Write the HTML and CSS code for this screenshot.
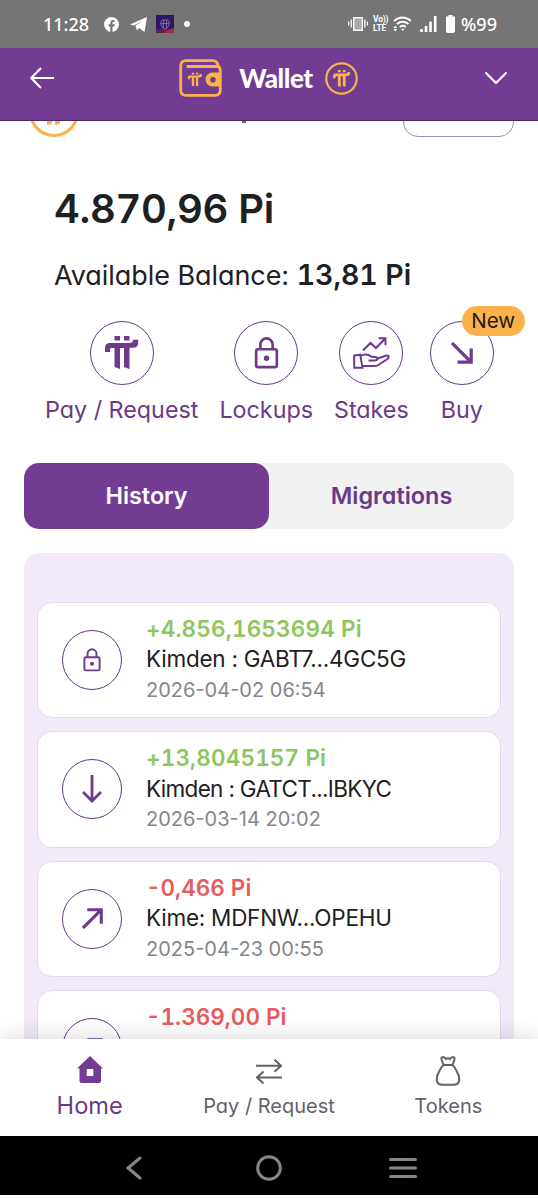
FILE: index.html
```html
<!DOCTYPE html>
<html lang="en">
<head>
  <meta charset="UTF-8">
  <title>Wallet</title>
  <link rel="stylesheet" href="styles.css">
</head>
<body>

<svg class="sprite">
  <symbol id="pi" viewBox="0 0 34 34">
    <path d="M9.500 0h5.500v4.500h-5.500zM19 0h5.500v4.500h-5.500zM0 16v-4c0-3.500 2-5 5-5h19c3 0 4-1 4-3.200h5.200v2.700c0 3.500-1.800 5.300-5 5.300h-3.700V33l-5.500-2V12h-4v21l-5.500-2V12H7c-1.500 0-2 .5-2 2v2z"/>
  </symbol>
  <symbol id="lock" viewBox="0 0 26 34">
    <path d="M6.500 13V8a6.500 6.500 0 0 1 13 0v5M4 13h18a2 2 0 0 1 2 2v15a2 2 0 0 1-2 2H4a2 2 0 0 1-2-2V15a2 2 0 0 1 2-2z"/>
    <circle cx="13" cy="22.500" r="1.500"/>
  </symbol>
  <symbol id="upright" viewBox="0 0 22 22"><path d="M1 21L20 2M5.500 1.800H20.200V16.500"/></symbol>
</svg>

<div class="statusbar">
  <span class="clock">11:28</span>
  <svg class="fb" width="15" height="15" viewBox="0 0 15 15"><circle cx="7.500" cy="7.500" r="7.500" fill="#fff"/><path d="M6.300 15V9.500H4.500V7.200h1.800V5.900c0-2 1-3 2.800-3h1.500v2.100H9.500c-.7 0-1 .3-1 1v1.200h2.200l-.3 2.300H8.500V15z" fill="#757575"/></svg>
  <svg class="tg" width="17" height="15" viewBox="0 0 17 15"><path d="M0 7.500L17 0l-2.500 15-5.500-4-2 2.500-1.500-4.700L13 3.500 4 8.500z" fill="#fff"/></svg>
  <svg class="app" width="18" height="18" viewBox="0 0 18 18"><rect width="18" height="18" fill="#2b1763"/><path d="M0 14l18-1v5H0z" fill="#61204f"/><path d="M10 16l8-3v5H9z" fill="#a02a55"/><path d="M6 5h6l1.500 3-1.500 4-3 2-3-2-1.500-4zM7.500 5v8M10.500 5v8M5 8.500h8" fill="none" stroke="#8b78bd" stroke-width=".8"/></svg>
  <span class="more"></span>
  <svg class="vibrate" width="20" height="14" viewBox="0 0 20 14"><path d="M.6 4.500v4M3.200 2.500v8M16.800 2.500v8M19.400 4.500v4" stroke="#fff" stroke-width="1.300"/><rect x="5.700" y=".7" width="8.600" height="12.600" fill="#a9a9a9" stroke="#fff" stroke-width="1.300"/></svg>
  <span class="volte"><b>Vo))</b><b>LTE</b></span>
  <svg class="wifi" width="19" height="16" viewBox="0 0 19 16"><path d="M1 5Q9.500-2 18 5M4 8q5.500-4.500 11.500 0M6.800 11q3-2.400 6 0" fill="none" stroke="#fff" stroke-width="1.800"/><path d="M8.200 12.800h3.300L9.800 15zM.5 12l1.800-2.500L4 12zM.5 13h3.500l-1.700 2.500z" fill="#fff"/></svg>
  <svg class="signal" width="17" height="16" viewBox="0 0 17 16"><path d="M1.500 13v3M6 10v6M10.500 5.500V16M15.200 0v16" stroke="#fff" stroke-width="2.600"/></svg>
  <svg class="battery" width="9" height="18" viewBox="0 0 9 18"><path d="M2.500 0h4v1.500H9V16a2 2 0 0 1-2 2H2a2 2 0 0 1-2-2V1.500h2.500z" fill="#fff"/></svg>
  <span class="percent">%99</span>
</div>

<div class="header">
  <svg class="back" width="24" height="22" viewBox="0 0 24 22"><path d="M24 11H1.500M11 1L1.200 11 11 21"/></svg>
  <div class="brand">
    <svg class="wallet" width="43" height="38" viewBox="0 0 43 38">
      <path d="M7 1.700h27q4.500 0 5 5.300 2.300 1.500 2.300 5v19q0 5.300-5.300 5.300H7q-5.300 0-5.300-5.300V7q0-5.300 5.300-5.300zM7.500 7.500h31" fill="none" stroke="#fbb24b" stroke-width="2.800"/>
      <path d="M42 13.500h-8.500a7 7 0 0 0 0 14H42zM34 18a2.800 2.800 0 1 1 0 5.600 2.800 2.800 0 0 1 0-5.600z" fill="#fbb24b" fill-rule="evenodd"/>
      <use href="#pi" x="8.500" y="13.500" width="15" height="14.500" fill="#fbb24b"/>
    </svg>
    <span class="title">Wallet</span>
    <svg class="coin" width="33" height="33" viewBox="0 0 33 33"><circle cx="16.500" cy="16.500" r="15.200" fill="none" stroke="#fbb24b" stroke-width="2.200"/><use href="#pi" x="8" y="8" width="17.500" height="17.500" fill="#fbb24b"/></svg>
  </div>
  <svg class="chevron" width="24" height="14" viewBox="0 0 24 14"><path d="M1.500 1.500L12 12 22.500 1.500"/></svg>
</div>

<div class="content">
  <div class="account">
    <div class="avatar"><svg width="20" height="34" viewBox="0 0 20 34"><path d="M3 0h5v33l-5 1zM11 0h5v33l-5 1z" fill="#fbb24b"/></svg></div>
    <div class="caret"></div>
    <div class="outline"></div>
  </div>

  <div class="total"><span>4.870,96 Pi</span></div>
  <div class="available"><span>Available Balance:</span> <strong>13,81 Pi</strong></div>

  <div class="actions">
    <div class="action">
      <div class="ring"><svg class="solid" width="34" height="34"><use href="#pi"/></svg></div>
      <span>Pay / Request</span>
    </div>
    <div class="action">
      <div class="ring"><svg width="25" height="32"><use href="#lock"/></svg></div>
      <span>Lockups</span>
    </div>
    <div class="action">
      <div class="ring"><svg class="thin" width="37" height="32" viewBox="0 0 37 32"><path d="M10 13.500l7.500-7.500 5.500 5L32 1.800M25.500 1.300h7v7M1.200 18.500l6-.8 2.300 13H1.200zM7.500 19q4-2.500 8-1 2 2 6 2 3 0 3 1.800 0 1.700-3 1.700h-6M24.500 21.500l8-2.800q3-.5 3.200 1.300 0 1.200-2 2.500l-8.500 5.500q-2 1.200-5 1H9"/></svg></div>
      <span>Stakes</span>
    </div>
    <div class="action">
      <div class="ring"><svg class="thick" width="22" height="22" viewBox="0 0 22 22"><path d="M1 1l19 19M6.500 20.200h13.700V6.500"/></svg></div>
      <span>Buy</span>
      <div class="badge"><span>New</span></div>
    </div>
  </div>

  <div class="tabs">
    <div class="tab active"><span>History</span></div>
    <div class="tab"><span>Migrations</span></div>
  </div>

  <div class="history">
    <div class="card">
      <div class="ring small"><svg width="18" height="24"><use href="#lock"/></svg></div>
      <div class="info">
        <span class="amount in">+4.856,1653694 Pi</span>
        <span class="party">Kimden : GABT7...4GC5G</span>
        <span class="date">2026-04-02 06:54</span>
      </div>
    </div>
    <div class="card">
      <div class="ring small"><svg width="20" height="28" viewBox="0 0 20 28"><path d="M10 0v26M1 17l9 9 9-9"/></svg></div>
      <div class="info">
        <span class="amount in">+13,8045157 Pi</span>
        <span class="party tight">Kimden : GATCT...IBKYC</span>
        <span class="date">2026-03-14 20:02</span>
      </div>
    </div>
    <div class="card">
      <div class="ring small"><svg class="thick" width="21" height="21"><use href="#upright"/></svg></div>
      <div class="info">
        <span class="amount out">-0,466 Pi</span>
        <span class="party">Kime: MDFNW...OPEHU</span>
        <span class="date">2025-04-23 00:55</span>
      </div>
    </div>
    <div class="card">
      <div class="ring small"><svg class="thick" width="21" height="21"><use href="#upright"/></svg></div>
      <div class="info">
        <span class="amount out">-1.369,00 Pi</span>
      </div>
    </div>
  </div>
</div>

<div class="bottomnav">
  <div class="navitem current">
    <svg width="26" height="27" viewBox="0 0 26 27"><path d="M13 0l13 12.500h-2V25a2 2 0 0 1-2 2H4.500a2 2 0 0 1-2-2V12.500H0zM9.700 13v7h6.600v-7z" fill="#723c93" fill-rule="evenodd"/></svg>
    <span>Home</span>
  </div>
  <div class="navitem">
    <svg width="26" height="30" viewBox="0 0 26 30"><path d="M0 9.800h25M18.500 3.800l6.500 6-6.500 6M26 21.500H1M7.500 15.500L1 21.500l6.500 6"/></svg>
    <span>Pay / Request</span>
  </div>
  <div class="navitem">
    <svg width="26" height="30" viewBox="0 0 26 30"><path d="M8.500 9L6.500 3.500Q6 1.500 8 1q2 0 3 2 2-1.500 4 0 1-2 3-2 2 .5 1.500 2.500L17.500 9zM8.500 9Q6 11 2.300 19.500 0 28.500 7 28.800h12q7-.3 4.700-9.300Q20 11 17.500 9"/></svg>
    <span>Tokens</span>
  </div>
</div>

<div class="sysnav">
  <svg width="16" height="24" viewBox="0 0 16 24"><path d="M14 2L2 12l12 10"/></svg>
  <svg width="26" height="26" viewBox="0 0 26 26"><circle cx="13" cy="13" r="11.300"/></svg>
  <svg width="28" height="22" viewBox="0 0 28 22"><path d="M1.500 2.500h25M1.500 11h25M1.500 19.500h25"/></svg>
</div>

</body>
</html>
```

FILE: styles.css
```css
* {
  box-sizing: border-box;
}
body {
  margin: 0;
  height: 1199px;
  display: flex;
  flex-direction: column;
  overflow: hidden;
  background: #fff;
  color: #1f2021;
  font-family: Inter, "Open Sans", sans-serif;
  font-weight: 370;
  font-feature-settings: "cv11";
}
svg {
  display: block;
  flex: none;
}
span, strong {
  white-space: nowrap;
}
.sprite {
  position: absolute;
  width: 0;
  height: 0;
}
.statusbar {
  flex: none;
  height: 48px;
  padding: 0 43px;
  display: flex;
  align-items: center;
  background: #757575;
  color: #fff;
  font-family: "Noto Sans", sans-serif;
  font-size: 18px;
  font-weight: 500;
}
.clock {
  width: 46px;
}
.fb { margin-left: 15px; }
.tg { margin-left: 11px; }
.app { margin-left: 9px; }
.more {
  width: 6px;
  height: 6px;
  margin: 0 auto 0 10px;
  border-radius: 50%;
  background: #fff;
}
.volte {
  width: 15px;
  display: flex;
  flex-direction: column;
  margin-left: 5px;
  font-family: Roboto, sans-serif;
  font-size: 8.5px;
  letter-spacing: -0.2px;
  line-height: 9px;
}
.wifi { margin-left: 5px; }
.signal { margin-left: 8px; }
.battery { margin-left: 9px; }
.percent {
  width: 34px;
  margin-left: 6px;
}
.header {
  flex: none;
  height: 73px;
  padding: 0 30px 12px;
  display: flex;
  align-items: center;
  justify-content: space-between;
  background: #723c93;
  border-bottom: 1px solid #4b2767;
}
.back, .chevron {
  fill: none;
  stroke: #fff;
  stroke-width: 2.2;
}
.brand {
  display: flex;
  align-items: center;
}
.title {
  margin: 0 13px 0 17px;
  color: #fff;
  font-family: Lato, sans-serif;
  font-size: 26px;
  font-weight: 900;
  letter-spacing: -0.4px;
}
.wallet, .coin {
  margin-left: -1px;
}
.content {
  flex: 1;
  min-height: 0;
  overflow: hidden;
}
.account {
  height: 16px;
  padding: 0 24px 0 29px;
  display: flex;
  align-items: flex-end;
  justify-content: space-between;
  overflow: hidden;
}
.avatar {
  flex: none;
  width: 50px;
  height: 50px;
  padding: 1px 12px;
  border: 3px solid #fbb24b;
  border-radius: 50%;
}
.caret {
  align-self: flex-start;
  width: 4px;
  height: 2px;
  margin-left: 5px;
  background: #6b6b70;
}
.outline {
  flex: none;
  width: 111px;
  height: 44px;
  border: 1px solid #a18bb8;
  border-radius: 15px;
}
.total {
  height: 60px;
  margin: 42px 0 0 54px;
  font-size: 40px;
  font-weight: 600;
  font-feature-settings: "cv11", "tnum";
  letter-spacing: -0.35px;
  line-height: 60px;
}
.available {
  height: 38px;
  margin: 17px 0 0 54px;
  font-size: 27px;
  letter-spacing: -0.06px;
  line-height: 37px;
}
.available strong {
  font-size: 28.5px;
  font-weight: 600;
  font-feature-settings: "cv11", "tnum";
}
.actions {
  display: flex;
  gap: 21px;
  margin: 27px 0 0 45px;
}
.action {
  position: relative;
  display: flex;
  flex-direction: column;
  align-items: center;
  gap: 8px;
  color: #6a3989;
  font-size: 23.3px;
  line-height: 33px;
}
.ring {
  flex: none;
  width: 64px;
  height: 64px;
  display: flex;
  align-items: center;
  justify-content: center;
  border: 1.5px solid #663a84;
  border-radius: 50%;
  fill: none;
  stroke: #6d3a8e;
  stroke-width: 2.8;
}
.ring .solid {
  fill: #6d3a8e;
  stroke: none;
}
.ring .thin { stroke-width: 2; }
.ring .thick { stroke-width: 3.2; }
.ring.small {
  width: 60px;
  height: 60px;
}
.badge {
  position: absolute;
  left: 32px;
  top: -15px;
  width: 63px;
  height: 30px;
  border-radius: 15px;
  background: #fbb24b;
  color: #1f1a14;
  font-size: 20.5px;
  line-height: 30px;
  text-align: center;
}
.tabs {
  display: flex;
  height: 66px;
  margin: 37px 24px 0;
  border-radius: 15px;
  background: #f1f1f1;
}
.tab {
  flex: 1;
  border-radius: 15px;
  color: #6a3989;
  font-size: 23.4px;
  font-weight: 600;
  line-height: 66px;
  text-align: center;
}
.active {
  background: #723c93;
  color: #fff;
}
.history {
  display: flex;
  flex-direction: column;
  gap: 13px;
  margin: 24px 24px 0;
  padding: 49px 13px;
  border-radius: 15px;
  background: #f2eaf9;
}
.card {
  height: 116.4px;
  padding: 11px 24px 0;
  display: flex;
  gap: 24px;
  border: 1.5px solid #e4d8f0;
  border-radius: 15px;
  background: #fff;
}
.card .ring {
  margin-top: 16px;
}
.info {
  display: flex;
  flex-direction: column;
  align-items: flex-start;
  font-size: 22.5px;
  line-height: 30.4px;
}
.amount {
  font-weight: 600;
  font-feature-settings: "cv11", "tnum";
}
.in {
  color: #8cc65c;
  letter-spacing: 0.15px;
}
.out { color: #e65c5c; }
.party {
  letter-spacing: -0.25px;
}
.tight {
  letter-spacing: -0.68px;
}
.date {
  color: #85868a;
  font-size: 20px;
}
.bottomnav {
  position: relative;
  flex: none;
  height: 97px;
  display: flex;
  background: #fff;
  box-shadow: 0 0 24px rgba(0,0,0,0.16);
}
.navitem {
  flex: 1;
  display: flex;
  flex-direction: column;
  align-items: center;
  padding-top: 17px;
  color: #626266;
  font-size: 20px;
  line-height: 28px;
}
.navitem svg {
  fill: none;
  stroke: #626266;
  stroke-width: 2;
}
.navitem span {
  margin-top: auto;
  margin-bottom: 16px;
}
.current {
  color: #6a3989;
  font-size: 23.6px;
}
.current svg {
  stroke: none;
}
.sysnav {
  position: relative;
  flex: none;
  height: 59px;
  margin-bottom: 4px;
  padding: 4px 121px 0 126px;
  display: flex;
  align-items: center;
  justify-content: space-between;
  background: #000;
}
.sysnav svg:nth-child(2) {
  margin-left: 6px;
}
.sysnav svg {
  fill: none;
  stroke: #868686;
  stroke-width: 3;
  stroke-linecap: round;
}
```
